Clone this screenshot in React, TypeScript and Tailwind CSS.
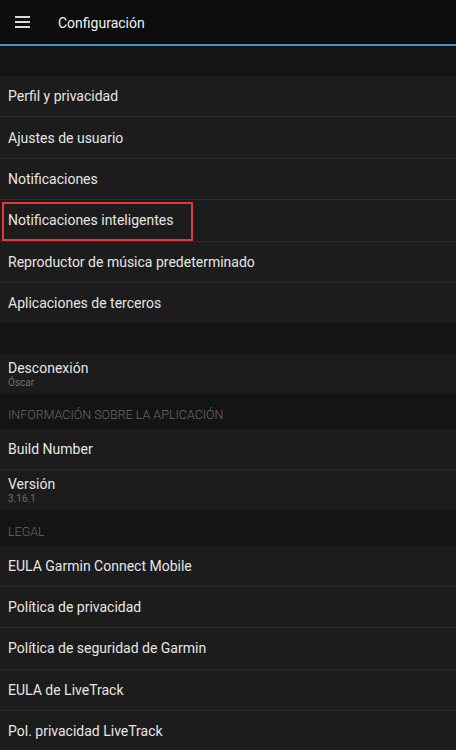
import { Fragment } from 'react';

type Row = { title: string; subtitle?: string; highlighted?: boolean };

const mainRows: Row[] = [
  { title: 'Perfil y privacidad' },
  { title: 'Ajustes de usuario' },
  { title: 'Notificaciones' },
  { title: 'Notificaciones inteligentes', highlighted: true },
  { title: 'Reproductor de música predeterminado' },
  { title: 'Aplicaciones de terceros' },
];

const appRows: Row[] = [{ title: 'Build Number' }, { title: 'Versión', subtitle: '3.16.1' }];

const legalRows: Row[] = [
  { title: 'EULA Garmin Connect Mobile' },
  { title: 'Política de privacidad' },
  { title: 'Política de seguridad de Garmin' },
  { title: 'EULA de LiveTrack' },
  { title: 'Pol. privacidad LiveTrack' },
];

function SettingsRow({ row }: { row: Row }) {
  return (
    <div className="h-[40.4px] bg-[#1c1c1c] flex flex-col justify-center px-2 relative">
      <span className="text-[14px] leading-[18px] text-[#e6e6e6]">{row.title}</span>
      {row.subtitle && <span className="text-[10px] leading-[12px] text-[#6e6e6e]">{row.subtitle}</span>}
      {row.highlighted && (
        <div className="absolute left-[2px] top-[2px] w-[191px] h-[39px] border-2 border-[#e53935]" />
      )}
    </div>
  );
}

function Group({ rows }: { rows: Row[] }) {
  return (
    <div>
      {rows.map((row, i) => (
        <Fragment key={row.title}>
          {i > 0 && <div className="h-px bg-[#2e2e2e]" />}
          <SettingsRow row={row} />
        </Fragment>
      ))}
    </div>
  );
}

function SectionHeader({ label }: { label: string }) {
  return (
    <div className="h-[35px] bg-[#141414] flex items-center px-2 pt-[9px] text-[12.5px] font-light text-[#6a6a6a]">
      {label}
    </div>
  );
}

export default function App() {
  return (
    <div className="w-[456px] h-[750px] overflow-hidden bg-[#141414] font-['Roboto',sans-serif]">
      <header className="h-[44px] bg-[#0c0c0c] flex items-center">
        <svg className="ml-[15px] w-[15px] h-[12px]" viewBox="0 0 15 12" fill="#d8d8d8">
          <rect x="0" y="0" width="15" height="2" />
          <rect x="0" y="5" width="15" height="2" />
          <rect x="0" y="10" width="15" height="2" />
        </svg>
        <h1 className="ml-[28px] mt-[2px] text-[14px] text-[#f2f2f2]">Configuración</h1>
      </header>
      <div className="h-[2px] bg-[#3a95d6]" />
      <div className="h-[30px]" />
      <Group rows={mainRows} />
      <div className="h-[30px]" />
      <Group rows={[{ title: 'Desconexión', subtitle: 'Óscar' }]} />
      <SectionHeader label="INFORMACIÓN SOBRE LA APLICACIÓN" />
      <Group rows={appRows} />
      <SectionHeader label="LEGAL" />
      <Group rows={legalRows} />
    </div>
  );
}
